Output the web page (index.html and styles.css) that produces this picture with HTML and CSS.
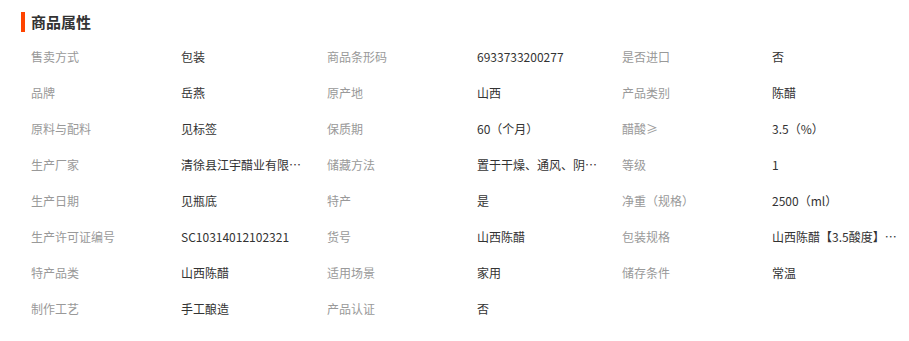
FILE: index.html
```html
<!DOCTYPE html>
<html lang="zh-CN">
<head>
<meta charset="utf-8">
<title>商品属性</title>
<link rel="stylesheet" href="styles.css">
</head>
<body>
<section class="attrs">
  <h2 class="attrs-title">商品属性</h2>
  <div class="attrs-grid">
    <div class="k">售卖方式</div><div class="v">包装</div>
    <div class="k">商品条形码</div><div class="v">6933733200277</div>
    <div class="k">是否进口</div><div class="v">否</div>

    <div class="k">品牌</div><div class="v">岳燕</div>
    <div class="k">原产地</div><div class="v">山西</div>
    <div class="k">产品类别</div><div class="v">陈醋</div>

    <div class="k">原料与配料</div><div class="v">见标签</div>
    <div class="k">保质期</div><div class="v">60（个月）</div>
    <div class="k">醋酸≥</div><div class="v">3.5（%）</div>

    <div class="k">生产厂家</div><div class="v">清徐县江宇醋业有限公司</div>
    <div class="k">储藏方法</div><div class="v">置于干燥、通风、阴凉处</div>
    <div class="k">等级</div><div class="v">1</div>

    <div class="k">生产日期</div><div class="v">见瓶底</div>
    <div class="k">特产</div><div class="v">是</div>
    <div class="k">净重（规格）</div><div class="v">2500（ml）</div>

    <div class="k">生产许可证编号</div><div class="v">SC10314012102321</div>
    <div class="k">货号</div><div class="v">山西陈醋</div>
    <div class="k">包装规格</div><div class="v">山西陈醋【3.5酸度】2500ml</div>

    <div class="k">特产品类</div><div class="v">山西陈醋</div>
    <div class="k">适用场景</div><div class="v">家用</div>
    <div class="k">储存条件</div><div class="v">常温</div>

    <div class="k">制作工艺</div><div class="v">手工酿造</div>
    <div class="k">产品认证</div><div class="v">否</div>
  </div>
</section>
</body>
</html>
```

FILE: styles.css
```css
html, body {
  margin: 0;
  padding: 0;
  background: #fff;
}

body {
  font-family: "Noto Sans CJK SC", "Liberation Sans", sans-serif;
  font-size: 12px;
  color: #333;
}

.attrs {
  padding-top: 12px;
}

.attrs-title {
  margin: 0 0 7px 21px;
  padding-left: 6px;
  border-left: 4px solid #ff4400;
  font-size: 15px;
  font-weight: bold;
  line-height: 20px;
  height: 20px;
  color: #333;
  display: flex;
  align-items: center;
}

.attrs-grid {
  margin-left: 31px;
  display: grid;
  grid-template-columns: 150px 146px 150px 145px 150px 1fr;
  grid-auto-rows: 36px;
  align-items: center;
}

.k {
  color: #999;
  line-height: 18px;
  white-space: nowrap;
}

.v {
  color: #333;
  line-height: 18px;
  max-width: 127px;
  white-space: nowrap;
  overflow: hidden;
  text-overflow: ellipsis;
}
```
